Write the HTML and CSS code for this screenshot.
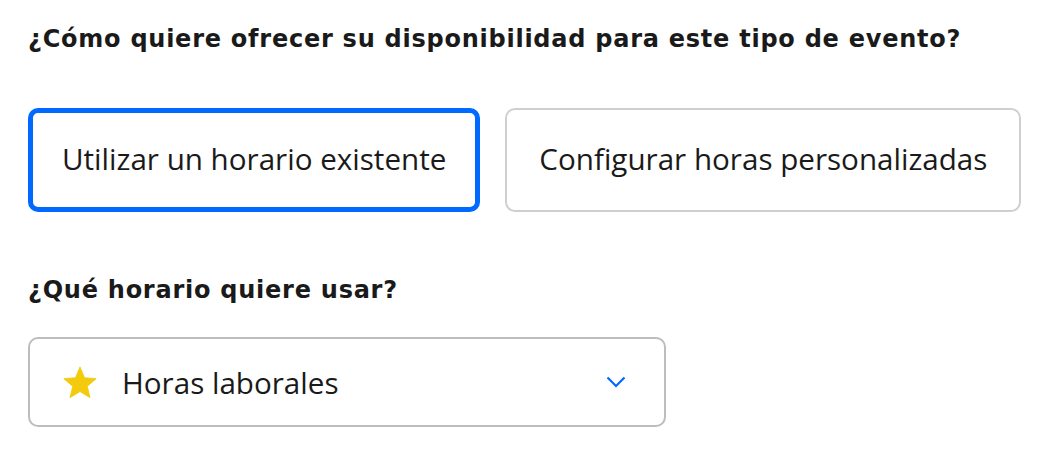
FILE: index.html
```html
<!DOCTYPE html>
<html lang="es">

<head>
    <meta charset="UTF-8">
    <meta name="viewport" content="width=device-width, initial-scale=1.0">
    <title>Disponibilidad</title>
    <link rel="stylesheet" href="styles.css">
</head>

<body>
    <div class="panel">
        <h2 class="question">¿Cómo quiere ofrecer su disponibilidad para este tipo de evento?</h2>
        <div class="choices">
            <button class="choice selected">Utilizar un horario existente</button>
            <button class="choice">Configurar horas personalizadas</button>
        </div>

        <h2 class="question">¿Qué horario quiere usar?</h2>
        <div class="select">
            <svg class="star" viewBox="0 0 24 23" width="34" height="33">
                <path d="M12 .5L15.17 8.13L23.41 8.79L17.14 14.17L19.05 22.21L12 17.9L4.95 22.21L6.86 14.17L.59 8.79L8.83 8.13Z"
                    fill="#f3cb0c" stroke="#f3cb0c" stroke-width=".6" stroke-linejoin="round" />
            </svg>
            <span class="select-label">Horas laborales</span>
            <svg class="chevron" viewBox="0 0 20 12" width="20" height="12">
                <path d="M1.5 1.5l8.5 8.5 8.5-8.5" fill="none" stroke="#0069ff" stroke-width="2.2" />
            </svg>
        </div>
    </div>
</body>

</html>
```

FILE: styles.css
```css
body {
    margin: 0;
    font-family: 'Open Sans', 'Liberation Sans', sans-serif;
    color: #1a1a1a;
    background: #fff;
}

.panel {
    padding: 22px 20px 22px 28px;
}

.question {
    margin: 0;
    font-family: 'DejaVu Sans', 'Open Sans', sans-serif;
    font-size: 24px;
    line-height: 34px;
    font-weight: 700;
    letter-spacing: 0.75px;
}

.choices {
    display: flex;
    gap: 25px;
    margin: 52px 0 61px;
}

.choice {
    flex: none;
    white-space: nowrap;
    height: 104px;
    padding: 0 32px 4px;
    font-family: inherit;
    font-size: 29.6px;
    color: #1a1a1a;
    background: #fff;
    border: 2px solid #cfcfcf;
    border-radius: 10px;
}

.choice.selected {
    border: 5px solid #0069ff;
    padding: 0 29px 4px;
}

.select {
    display: flex;
    align-items: center;
    width: 638px;
    height: 90px;
    margin-top: 30px;
    box-sizing: border-box;
    padding: 0 38px 0 33px;
    border: 2px solid #bdbdbd;
    border-radius: 10px;
}

.star {
    flex: none;
}

.select-label {
    flex: 1;
    margin-left: 25px;
    font-size: 29.6px;
}

.chevron {
    flex: none;
}
```
